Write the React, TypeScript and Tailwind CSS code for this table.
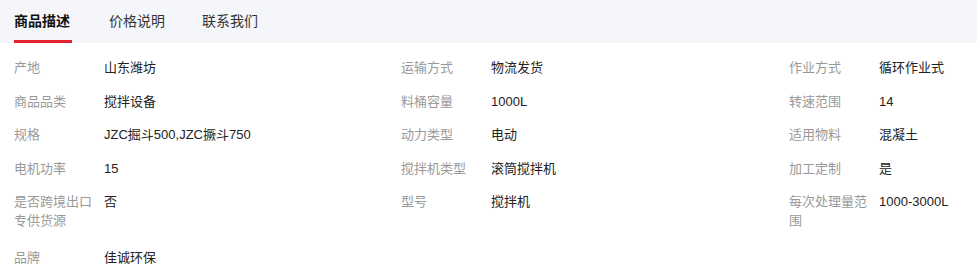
import React from "react";

type Attr = { label: string; value: string };

const rows: Attr[][] = [
  [
    { label: "产地", value: "山东潍坊" },
    { label: "运输方式", value: "物流发货" },
    { label: "作业方式", value: "循环作业式" },
  ],
  [
    { label: "商品品类", value: "搅拌设备" },
    { label: "料桶容量", value: "1000L" },
    { label: "转速范围", value: "14" },
  ],
  [
    { label: "规格", value: "JZC掘斗500,JZC撅斗750" },
    { label: "动力类型", value: "电动" },
    { label: "适用物料", value: "混凝土" },
  ],
  [
    { label: "电机功率", value: "15" },
    { label: "搅拌机类型", value: "滚筒搅拌机" },
    { label: "加工定制", value: "是" },
  ],
  [
    { label: "是否跨境出口专供货源", value: "否" },
    { label: "型号", value: "搅拌机" },
    { label: "每次处理量范围", value: "1000-3000L" },
  ],
  [{ label: "品牌", value: "佳诚环保" }],
];

const tabs = ["商品描述", "价格说明", "联系我们"];

function Cell({ item }: { item: Attr }) {
  return (
    <div className="flex items-start">
      <div className="w-[79px] shrink-0 text-[#999999] break-all">{item.label}</div>
      <div className="ml-[11px] text-[#222222]">{item.value}</div>
    </div>
  );
}

export default function App() {
  return (
    <div
      className="w-[977px] h-[280px] bg-white overflow-hidden"
      style={{ fontFamily: '"Liberation Sans", "Noto Sans CJK SC", sans-serif' }}
    >
      <div className="h-[43px] bg-[#f5f6fa] flex items-stretch pl-[14px] gap-[37px]">
        {tabs.map((t, i) => (
          <div
            key={t}
            className={
              i === 0
                ? "flex items-center text-[14px] font-bold text-[#111111] border-b-[3px] border-[#e4202e] pt-[3px] w-[58px]"
                : "flex items-center text-[14px] text-[#333333]"
            }
          >
            {t}
          </div>
        ))}
      </div>
      <div className="pl-[14px] pt-[15px] flex flex-col gap-[14.5px] text-[13px] leading-[19px]">
        {rows.map((row, ri) => (
          <div
            key={ri}
            className={ri === 4 ? "grid grid-cols-[387px_388px_1fr] pb-[3px]" : "grid grid-cols-[387px_388px_1fr]"}
          >
            {row.map((item) => (
              <Cell key={item.label} item={item} />
            ))}
          </div>
        ))}
      </div>
    </div>
  );
}
